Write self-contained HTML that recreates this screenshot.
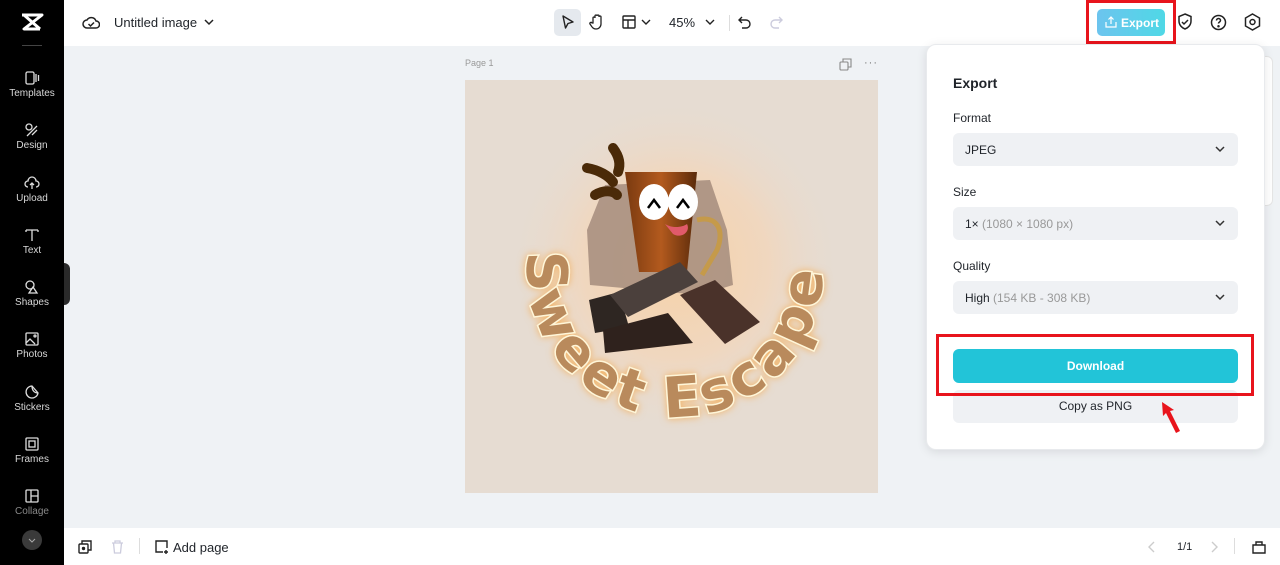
<!DOCTYPE html>
<html><head><meta charset="utf-8"><style>
*{margin:0;padding:0;box-sizing:border-box}
body{width:1280px;height:565px;overflow:hidden;background:#eff2f5;font-family:"Liberation Sans",sans-serif;position:relative;color:#1f2329}
.abs{position:absolute}
#side{left:0;top:0;width:64px;height:565px;background:#000}
.si{position:absolute;left:0;width:64px;text-align:center;color:#d8d8d8;font-size:10px}
.si svg{display:block;margin:0 auto 2px}
#top{left:64px;top:0;width:1216px;height:46px;background:#fff}
#bot{left:64px;top:528px;width:1216px;height:37px;background:#fff}
.lbl{font-size:12px;color:#1f2329}
.sel{position:absolute;left:953px;width:285px;height:33px;background:#eff1f4;border-radius:6px;font-size:12px;padding:10px 12px;color:#1f2329}
.sel .g{color:#999}
.chev{position:absolute;right:12px;top:10px}
</style></head><body>
<div id="side" class="abs">
  <svg class="abs" style="left:20px;top:12px" width="24" height="20" viewBox="0 0 24 20"><path d="M2 3h20L4 17h16M4 3l16 14" stroke="#fff" stroke-width="3" fill="none" stroke-linejoin="round"/></svg>
  <div class="abs" style="left:22px;top:45px;width:20px;height:1px;background:#444"></div>
  <div class="si" style="top:70px"><svg width="16" height="16" viewBox="0 0 16 16" fill="none" stroke="#ddd" stroke-width="1.3"><rect x="2" y="2" width="8" height="12" rx="1.5"/><path d="M12 4v8M14.5 5v6"/></svg>Templates</div>
  <div class="si" style="top:122px"><svg width="16" height="16" viewBox="0 0 16 16" fill="none" stroke="#ddd" stroke-width="1.3"><circle cx="5" cy="5" r="3"/><path d="M3 14l10-10M8 13l5-5"/></svg>Design</div>
  <div class="si" style="top:175px"><svg width="16" height="16" viewBox="0 0 16 16" fill="none" stroke="#ddd" stroke-width="1.3"><path d="M4 12a3 3 0 010-6 4 4 0 018 0 3 3 0 010 6M8 14V8M6 10l2-2 2 2"/></svg>Upload</div>
  <div class="si" style="top:227px"><svg width="16" height="16" viewBox="0 0 16 16" fill="none" stroke="#ddd" stroke-width="1.3"><path d="M2 3h12M8 3v11M2 3v2M14 3v2"/></svg>Text</div>
  <div class="si" style="top:279px"><svg width="16" height="16" viewBox="0 0 16 16" fill="none" stroke="#ddd" stroke-width="1.3"><circle cx="6" cy="6" r="4"/><path d="M9 8l4 6H5z"/></svg>Shapes</div>
  <div class="si" style="top:331px"><svg width="16" height="16" viewBox="0 0 16 16" fill="none" stroke="#ddd" stroke-width="1.3"><rect x="2" y="2" width="12" height="12" rx="1"/><path d="M2 12l4-4 5 5"/><circle cx="11" cy="5" r="1"/></svg>Photos</div>
  <div class="si" style="top:384px"><svg width="16" height="16" viewBox="0 0 16 16" fill="none" stroke="#ddd" stroke-width="1.3"><path d="M14 9A6 6 0 118 2l6 7zM8 2c0 4 2 7 6 7"/></svg>Stickers</div>
  <div class="si" style="top:436px"><svg width="16" height="16" viewBox="0 0 16 16" fill="none" stroke="#ddd" stroke-width="1.3"><rect x="2" y="2" width="12" height="12" rx="1"/><rect x="5" y="5" width="6" height="6"/></svg>Frames</div>
  <div class="si" style="top:488px;color:#888"><svg width="16" height="16" viewBox="0 0 16 16" fill="none" stroke="#ddd" stroke-width="1.3"><rect x="2" y="2" width="12" height="12" rx="1"/><path d="M7 2v12M7 8h7"/></svg>Collage</div>
  <div class="abs" style="left:22px;top:530px;width:20px;height:20px;border-radius:50%;background:#3a3a3a"><svg width="20" height="20" viewBox="0 0 20 20"><path d="M7 9l3 3 3-3" stroke="#aaa" fill="none"/></svg></div>
</div>
<div class="abs" style="left:64px;top:263px;width:6px;height:42px;background:#2a2a2a;border-radius:0 6px 6px 0"></div>

<div id="top" class="abs">
  <svg class="abs" style="left:18px;top:14px" width="18" height="16" viewBox="0 0 18 16" fill="none" stroke="#222" stroke-width="1.5"><path d="M5 14a4 4 0 010-8 5 5 0 019 1 3.5 3.5 0 010 7z"/><path d="M6.5 10l2 2 3.5-3.5"/></svg>
  <div class="abs" style="left:50px;top:15px;font-size:13px;color:#1f2329">Untitled image</div>
  <svg class="abs" style="left:140px;top:17px" width="10" height="10" viewBox="0 0 10 10"><path d="M1 3l4 4 4-4" stroke="#222" fill="none" stroke-width="1.5"/></svg>
  <div class="abs" style="left:490px;top:9px;width:27px;height:27px;background:#e5e9ee;border-radius:5px"></div>
  <svg class="abs" style="left:496px;top:14px" width="16" height="16" viewBox="0 0 16 16"><path d="M3 2l10 6-5 1.5L5.5 14z" fill="none" stroke="#222" stroke-width="1.4" stroke-linejoin="round"/></svg>
  <svg class="abs" style="left:525px;top:13px" width="16" height="18" viewBox="0 0 16 18" fill="none" stroke="#222" stroke-width="1.3"><path d="M4 10V5a1 1 0 012 0V3a1 1 0 012 0v0a1 1 0 012 0v1a1 1 0 012 0v7a5 5 0 01-5 5c-3 0-4-2-6-5a1 1 0 012-1z"/></svg>
  <svg class="abs" style="left:558px;top:15px" width="14" height="14" viewBox="0 0 14 14" fill="none" stroke="#222" stroke-width="1.4"><rect x="1" y="1" width="12" height="12" rx="1"/><path d="M1 5h12M6 5v8"/></svg>
  <svg class="abs" style="left:577px;top:18px" width="10" height="8" viewBox="0 0 10 8"><path d="M1 2l4 4 4-4" stroke="#222" fill="none" stroke-width="1.4"/></svg>
  <div class="abs" style="left:605px;top:15px;font-size:13px">45%</div>
  <svg class="abs" style="left:641px;top:18px" width="10" height="8" viewBox="0 0 10 8"><path d="M1 2l4 4 4-4" stroke="#222" fill="none" stroke-width="1.4"/></svg>
  <div class="abs" style="left:665px;top:15px;width:1px;height:16px;background:#ddd"></div>
  <svg class="abs" style="left:674px;top:15px" width="14" height="14" viewBox="0 0 14 14" fill="none" stroke="#222" stroke-width="1.4"><path d="M4 2L1 5l3 3M1 5h7a4 4 0 010 8H4"/></svg>
  <svg class="abs" style="left:705px;top:15px" width="14" height="14" viewBox="0 0 14 14" fill="none" stroke="#ccd" stroke-width="1.4"><path d="M10 2l3 3-3 3M13 5H6a4 4 0 000 8h4"/></svg>
  <div class="abs" style="left:1033px;top:9px;width:68px;height:27px;border-radius:5px;background:linear-gradient(90deg,#6cc4ee,#4fd8e6);color:#fff;font-size:12px;font-weight:bold;padding:7px 0 0 24px">Export</div>
  <svg class="abs" style="left:1041px;top:16px" width="12" height="12" viewBox="0 0 12 12" fill="none" stroke="#fff" stroke-width="1.2"><path d="M6 8V1M3.5 3.5L6 1l2.5 2.5M1 6v5h10V6"/></svg>
  <svg class="abs" style="left:1113px;top:13px" width="16" height="18" viewBox="0 0 16 18" fill="none" stroke="#222" stroke-width="1.5"><path d="M8 1l6 2.5V8c0 4-3 7-6 8-3-1-6-4-6-8V3.5z"/><path d="M5 9l2 2 4-4"/></svg>
  <svg class="abs" style="left:1146px;top:14px" width="17" height="17" viewBox="0 0 17 17" fill="none" stroke="#222" stroke-width="1.5"><circle cx="8.5" cy="8.5" r="7"/><path d="M6.5 6.5a2 2 0 114 0c0 1.5-2 1.5-2 3"/><circle cx="8.5" cy="12.2" r=".5" fill="#222"/></svg>
  <svg class="abs" style="left:1180px;top:13px" width="17" height="18" viewBox="0 0 17 18" fill="none" stroke="#222" stroke-width="1.5"><path d="M8.5 1l7 4v8l-7 4-7-4V5z"/><circle cx="8.5" cy="9" r="2.5"/></svg>
</div>
<div class="abs" style="left:1086px;top:0;width:90px;height:44px;border:3px solid #e8141c"></div>
<svg class="abs" style="left:1140px;top:50px" width="24" height="30" viewBox="0 0 24 30"><path d="M4 2l10 8-4 1 9 15-4 2-9-15-3 3z" fill="#e8141c"/></svg>

<div class="abs" style="left:465px;top:58px;font-size:9px;color:#999">Page 1</div>
<svg class="abs" style="left:839px;top:58px" width="13" height="13" viewBox="0 0 13 13" fill="none" stroke="#888" stroke-width="1.1"><rect x="1" y="4" width="8" height="8" rx="1"/><path d="M4 4V1h8v8H9"/></svg>
<div class="abs" style="left:864px;top:57px;font-size:11px;color:#777;letter-spacing:1px">···</div>

<svg class="abs" style="left:465px;top:80px" width="413" height="413" viewBox="0 0 413 413">
  <defs>
    <radialGradient id="gl"><stop offset="0" stop-color="#f6d2a8"/><stop offset="0.55" stop-color="#f0d7bf"/><stop offset="1" stop-color="#e6dcd2" stop-opacity="0"/></radialGradient>
    <linearGradient id="cup" x1="0" x2="1"><stop offset="0" stop-color="#7a3a10"/><stop offset=".5" stop-color="#b35a1e"/><stop offset="1" stop-color="#5a2a0a"/></linearGradient>
    <path id="arc" d="M63 172 A148 148 0 1 0 340 118"/>
    <filter id="glow" x="-10%" y="-10%" width="120%" height="120%"><feGaussianBlur in="SourceAlpha" stdDeviation="4" result="b"/><feFlood flood-color="#f2b56a" flood-opacity="1"/><feComposite operator="in" in2="b" result="g"/><feMerge><feMergeNode in="g"/><feMergeNode in="SourceGraphic"/></feMerge></filter>
  </defs>
  <rect width="413" height="413" fill="#e6dcd2"/>
  <circle cx="210" cy="185" r="170" fill="url(#gl)"/>
  <path d="M140 105 L245 100 L262 150 L268 205 L235 215 L125 205 L122 150z" fill="#a58c7c" opacity=".85"/>
  <path d="M148 68c6 8 8 16 5 24M122 88c12 2 22 8 26 14M130 115c8-5 18-5 22 0" stroke="#4a2a08" stroke-width="10" stroke-linecap="round" fill="none"/>
  <path d="M160 92h72l-10 100h-48z" fill="url(#cup)"/>
  <path d="M232 140c20-5 28 10 20 30l-15 25" stroke="#c59a4a" stroke-width="5" fill="none"/>
  <ellipse cx="189" cy="122" rx="15" ry="18" fill="#fff"/><ellipse cx="218" cy="122" rx="15" ry="18" fill="#fff"/>
  <path d="M183 128l6-8 6 8M212 128l6-8 6 8" stroke="#000" stroke-width="2.5" fill="none"/>
  <path d="M200 144c8 5 18 3 22 0 4 8-6 15-14 10z" fill="#e05a6a"/>
  <path d="M124 220l30-8 10 35-34 6z" fill="#2e2622"/>
  <path d="M145 215l70-33 18 20-70 35z" fill="#4b403c"/>
  <path d="M215 215l35-15 45 42-35 22z" fill="#4a322a"/>
  <path d="M138 250l65-17 25 30-88 10z" fill="#2f221d"/>
  <text filter="url(#glow)" font-family="DejaVu Sans" font-weight="bold" font-size="56" letter-spacing="4" fill="#b98a5c" stroke="#fff6d8" stroke-width="3" paint-order="stroke"><textPath href="#arc">Sweet Escape</textPath></text>
</svg>

<div class="abs" style="left:1255px;top:56px;width:18px;height:150px;background:#fff;border-radius:6px;border:1px solid #e5e5e5"></div>
<div class="abs" style="left:926px;top:44px;width:339px;height:406px;background:#fff;border-radius:10px;box-shadow:0 2px 10px rgba(0,0,0,.1);border:1px solid #e8eaed"></div>
<div class="abs" style="left:953px;top:75px;font-size:14px;font-weight:bold">Export</div>
<div class="abs lbl" style="left:953px;top:111px">Format</div>
<div class="sel" style="top:133px">JPEG<svg class="chev" width="12" height="12" viewBox="0 0 12 12"><path d="M2 4l4 4 4-4" stroke="#333" fill="none" stroke-width="1.5"/></svg></div>
<div class="abs lbl" style="left:953px;top:185px">Size</div>
<div class="sel" style="top:207px">1× <span class="g">(1080 × 1080 px)</span><svg class="chev" width="12" height="12" viewBox="0 0 12 12"><path d="M2 4l4 4 4-4" stroke="#333" fill="none" stroke-width="1.5"/></svg></div>
<div class="abs lbl" style="left:953px;top:259px">Quality</div>
<div class="sel" style="top:281px">High <span class="g">(154 KB - 308 KB)</span><svg class="chev" width="12" height="12" viewBox="0 0 12 12"><path d="M2 4l4 4 4-4" stroke="#333" fill="none" stroke-width="1.5"/></svg></div>
<div class="abs" style="left:953px;top:349px;width:285px;height:34px;background:#22c4d8;border-radius:6px;color:#fff;font-size:12px;font-weight:bold;text-align:center;line-height:34px">Download</div>
<div class="abs" style="left:953px;top:390px;width:285px;height:33px;background:#eff1f4;border-radius:6px;font-size:12px;text-align:center;line-height:33px">Copy as PNG</div>
<div class="abs" style="left:936px;top:334px;width:318px;height:62px;border:3px solid #e8141c"></div>
<svg class="abs" style="left:1158px;top:400px" width="26" height="36" viewBox="0 0 26 36"><path d="M4 2l12 8-4 1 10 20-4 2-10-20-3 3z" fill="#e8141c"/></svg>

<div id="bot" class="abs">
  <svg class="abs" style="left:14px;top:12px" width="14" height="14" viewBox="0 0 14 14" fill="none" stroke="#222" stroke-width="1.4"><rect x="1" y="4" width="9" height="9" rx="1"/><path d="M4 4V1h9v9h-3"/><circle cx="5.5" cy="8.5" r="1" fill="#222"/></svg>
  <svg class="abs" style="left:47px;top:12px" width="13" height="14" viewBox="0 0 13 14" fill="none" stroke="#ccd" stroke-width="1.3"><path d="M1 3h11M4 3V1h5v2M2.5 3l1 10h6l1-10"/></svg>
  <div class="abs" style="left:75px;top:10px;width:1px;height:16px;background:#ddd"></div>
  <svg class="abs" style="left:90px;top:11px" width="16" height="16" viewBox="0 0 16 16" fill="none" stroke="#222" stroke-width="1.4"><path d="M9 13H2V2h11v7M12 11v4M10 13h4"/></svg>
  <div class="abs" style="left:109px;top:12px;font-size:13px">Add page</div>
  <svg class="abs" style="left:1083px;top:13px" width="10" height="12" viewBox="0 0 10 12"><path d="M7 1L2 6l5 5" stroke="#ccc" fill="none" stroke-width="1.4"/></svg>
  <div class="abs" style="left:1113px;top:13px;font-size:11px">1/1</div>
  <svg class="abs" style="left:1145px;top:13px" width="10" height="12" viewBox="0 0 10 12"><path d="M3 1l5 5-5 5" stroke="#ccc" fill="none" stroke-width="1.4"/></svg>
  <div class="abs" style="left:1170px;top:10px;width:1px;height:16px;background:#ddd"></div>
  <svg class="abs" style="left:1187px;top:11px" width="16" height="15" viewBox="0 0 16 15" fill="none" stroke="#222" stroke-width="1.4"><path d="M2 6h12v8H2zM5 6V3h6v3"/></svg>
</div>
</body></html>
